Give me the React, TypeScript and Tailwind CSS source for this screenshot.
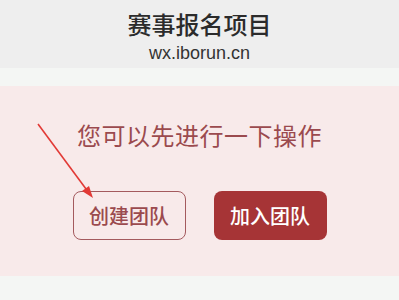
export default function App() {
  return (
    <div
      className="relative w-[399px] h-[300px] overflow-hidden bg-[#f4f6f4]"
      style={{ fontFamily: '"Noto Sans CJK SC", "Noto Sans", sans-serif' }}
    >
      <div className="h-[68px] bg-[#eeeeee] flex flex-col items-center pt-[8px]">
        <div className="text-[24px] leading-[32px] text-[#2b2b2b] font-medium">赛事报名项目</div>
        <div
          className="text-[18px] leading-[24px] text-[#333] mt-[1px]"
          style={{ fontFamily: '"Liberation Sans", Arial, sans-serif' }}
        >
          wx.iborun.cn
        </div>
      </div>
      <div className="mt-[18px] h-[190px] bg-[#f8eaea] flex flex-col items-center">
        <div className="mt-[33px] text-[24px] leading-[32px] text-[#9b4a4e] tracking-[0.5px]">
          您可以先进行一下操作
        </div>
        <div className="mt-[40px] flex gap-[28px]">
          <button className="w-[113px] h-[49px] rounded-[8px] border border-[#a45a5e] text-[#9b4a4e] text-[20px] font-medium bg-transparent">
            创建团队
          </button>
          <button className="w-[113px] h-[49px] rounded-[8px] bg-[#a63436] text-white text-[20px] font-medium">
            加入团队
          </button>
        </div>
      </div>
      <svg className="absolute left-0 top-0" width="399" height="300">
        <line x1="38" y1="124" x2="89" y2="193" stroke="#e23a36" strokeWidth="1.6" />
        <polygon points="93,198 82,191 89,186" fill="#e23a36" />
      </svg>
    </div>
  );
}
